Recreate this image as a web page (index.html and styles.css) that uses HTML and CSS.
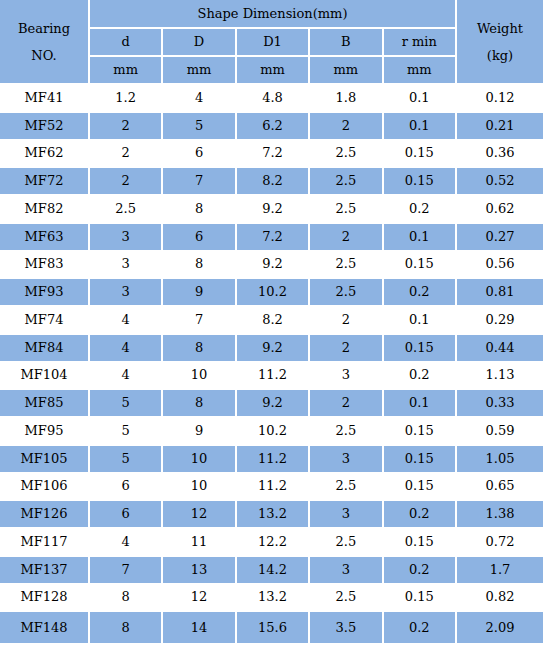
FILE: index.html
```html
<!DOCTYPE html>
<html lang="en">
<head>
    <meta charset="UTF-8">
    <title>MF Flanged Bearings - Dimensions</title>
    <link rel="stylesheet" href="styles.css">
</head>
<body>
    <table class="spec">
        <thead>
            <tr class="h1">
                <th rowspan="3" class="c-no">Bearing<br>NO.</th>
                <th colspan="5">Shape Dimension(mm)</th>
                <th rowspan="3" class="c-w">Weight<br>(kg)</th>
            </tr>
            <tr class="h2">
                <th class="c-d">d</th>
                <th class="c-D">D</th>
                <th class="c-d1">D1</th>
                <th class="c-b">B</th>
                <th class="c-r">r min</th>
            </tr>
            <tr class="h3">
                <th>mm</th>
                <th>mm</th>
                <th>mm</th>
                <th>mm</th>
                <th>mm</th>
            </tr>
        </thead>
        <tbody>
            <tr><td>MF41</td><td>1.2</td><td>4</td><td>4.8</td><td>1.8</td><td>0.1</td><td>0.12</td></tr>
            <tr class="alt"><td>MF52</td><td>2</td><td>5</td><td>6.2</td><td>2</td><td>0.1</td><td>0.21</td></tr>
            <tr><td>MF62</td><td>2</td><td>6</td><td>7.2</td><td>2.5</td><td>0.15</td><td>0.36</td></tr>
            <tr class="alt"><td>MF72</td><td>2</td><td>7</td><td>8.2</td><td>2.5</td><td>0.15</td><td>0.52</td></tr>
            <tr><td>MF82</td><td>2.5</td><td>8</td><td>9.2</td><td>2.5</td><td>0.2</td><td>0.62</td></tr>
            <tr class="alt"><td>MF63</td><td>3</td><td>6</td><td>7.2</td><td>2</td><td>0.1</td><td>0.27</td></tr>
            <tr><td>MF83</td><td>3</td><td>8</td><td>9.2</td><td>2.5</td><td>0.15</td><td>0.56</td></tr>
            <tr class="alt"><td>MF93</td><td>3</td><td>9</td><td>10.2</td><td>2.5</td><td>0.2</td><td>0.81</td></tr>
            <tr><td>MF74</td><td>4</td><td>7</td><td>8.2</td><td>2</td><td>0.1</td><td>0.29</td></tr>
            <tr class="alt"><td>MF84</td><td>4</td><td>8</td><td>9.2</td><td>2</td><td>0.15</td><td>0.44</td></tr>
            <tr><td>MF104</td><td>4</td><td>10</td><td>11.2</td><td>3</td><td>0.2</td><td>1.13</td></tr>
            <tr class="alt"><td>MF85</td><td>5</td><td>8</td><td>9.2</td><td>2</td><td>0.1</td><td>0.33</td></tr>
            <tr><td>MF95</td><td>5</td><td>9</td><td>10.2</td><td>2.5</td><td>0.15</td><td>0.59</td></tr>
            <tr class="alt"><td>MF105</td><td>5</td><td>10</td><td>11.2</td><td>3</td><td>0.15</td><td>1.05</td></tr>
            <tr><td>MF106</td><td>6</td><td>10</td><td>11.2</td><td>2.5</td><td>0.15</td><td>0.65</td></tr>
            <tr class="alt"><td>MF126</td><td>6</td><td>12</td><td>13.2</td><td>3</td><td>0.2</td><td>1.38</td></tr>
            <tr><td>MF117</td><td>4</td><td>11</td><td>12.2</td><td>2.5</td><td>0.15</td><td>0.72</td></tr>
            <tr class="alt"><td>MF137</td><td>7</td><td>13</td><td>14.2</td><td>3</td><td>0.2</td><td>1.7</td></tr>
            <tr><td>MF128</td><td>8</td><td>12</td><td>13.2</td><td>2.5</td><td>0.15</td><td>0.82</td></tr>
            <tr class="alt last"><td>MF148</td><td>8</td><td>14</td><td>15.6</td><td>3.5</td><td>0.2</td><td>2.09</td></tr>
        </tbody>
    </table>
</body>
</html>
```

FILE: styles.css
```css
body {
    margin: 0;
    background-color: #fff;
    font-family: "DejaVu Serif", serif;
    font-size: 13px;
    color: #000;
}
.spec {
    border-collapse: separate;
    border-spacing: 2px;
    margin: -2px;
    table-layout: fixed;
    width: 547px;
}
.spec th,
.spec td {
    padding: 0;
    text-align: center;
    vertical-align: middle;
    font-weight: normal;
    line-height: 18px;
}
.spec th {
    background-color: #8db3e2;
}
.spec td {
    height: 25.75px;
}
.spec tr.alt td {
    background-color: #8db3e2;
}
.spec tr.last td {
    height: 31px;
}
.h1 th {
    height: 27px;
}
.h2 th,
.h3 th {
    height: 26px;
}
.spec .c-no,
.spec .c-w {
    line-height: 27px;
}
.c-no { width: 88px; }
.c-d { width: 63px; }
.c-D { width: 83px; }
.c-d1 { width: 70px; }
.c-b { width: 70px; }
.c-r { width: 71px; }
.c-w { width: 86px; }
```
